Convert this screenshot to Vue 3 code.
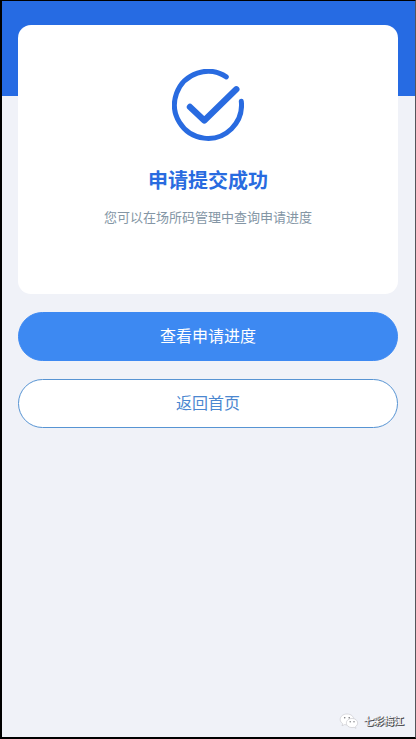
<script setup>
const title = '申请提交成功'
const hint = '您可以在场所码管理中查询申请进度'
</script>

<template>
  <div class="page">
    <main class="content">
      <section class="card">
        <svg class="icon" viewBox="0 0 72 72" fill="none" stroke="#296be0" stroke-linecap="round" stroke-linejoin="round" aria-hidden="true">
          <path d="M54.3 7.8A33.5 33.5 0 1 0 69.3 32.2" stroke-width="5" />
          <path d="M18 38L32.3 51.5L64.3 20.3" stroke-width="6.400" />
        </svg>
        <h1 class="title">{{ title }}</h1>
        <p class="hint">{{ hint }}</p>
      </section>
      <button class="btn primary" type="button">查看申请进度</button>
      <button class="btn outline" type="button">返回首页</button>
    </main>
    <footer class="mark">
      <svg class="mark-icon" viewBox="0 0 20 16" aria-hidden="true">
        <g fill="#ffffff" stroke="#c4c5ca" stroke-width="0.6" stroke-linejoin="round">
          <path d="M8 1C4.1 1 1.2 3.4 1.2 6.4c0 1.8 1 3.3 2.5 4.3L3 12.8l2.5-1.2c.8.2 1.6.3 2.5.3 3.8 0 6.8-2.5 6.8-5.5S11.8 1 8 1z" />
          <path d="M13 5.400c-3.2 0-5.7 2-5.7 4.600s2.5 4.600 5.7 4.600c.7 0 1.400-.1 2-.3l2 1-.5-1.700c1.300-.9 2.200-2.100 2.200-3.600 0-2.600-2.500-4.600-5.700-4.600z" />
        </g>
        <g fill="#77787c">
          <circle cx="5.700" cy="4.700" r="0.800" />
          <circle cx="10.200" cy="4.700" r="0.800" />
          <circle cx="11.200" cy="8.700" r="0.700" />
          <circle cx="15" cy="8.700" r="0.700" />
        </g>
      </svg>
      <span>七彩梅江</span>
    </footer>
  </div>
</template>

<style>
body {
  margin: 0;
}
</style>

<style scoped>
.page {
  box-sizing: border-box;
  min-height: 100vh;
  display: flex;
  flex-direction: column;
  justify-content: space-between;
  border: solid #000000;
  border-width: 1px 1px 2px 2px;
  border-right-color: #55555a;
  background: linear-gradient(#266be3, #266be3) 0 0 / 100% 95px no-repeat #f0f2f8;
  font-family: "Noto Sans CJK SC", sans-serif;
}

.content {
  display: flex;
  flex-direction: column;
  gap: 18px;
  padding: 24px 17px 0 16px;
}

.card {
  display: flex;
  flex-direction: column;
  align-items: center;
  padding: 44px 16px 67px;
  border-radius: 13px;
  background: #ffffff;
}

.icon {
  width: 72px;
  height: 72px;
}

.title {
  margin: 24px 0 0;
  font-size: 20px;
  line-height: 30px;
  font-weight: 700;
  color: #296be0;
}

.hint {
  margin: 12px 0 0;
  font-size: 13px;
  line-height: 20px;
  color: #8496a5;
}

.btn {
  box-sizing: border-box;
  height: 49px;
  padding: 0 0 4px;
  border: 1px solid #3d89f2;
  border-radius: 25px;
  font: 16px/24px "Noto Sans CJK SC", sans-serif;
}

.primary {
  background: #3d89f2;
  color: #ffffff;
}

.outline {
  border-color: #5794d3;
  background: #ffffff;
  color: #4b87d0;
}

.mark {
  display: flex;
  align-items: center;
  justify-content: flex-end;
  gap: 5px;
  padding: 0 11px 8px 0;
  font-size: 10px;
  line-height: 16px;
  color: #ffffff;
  text-shadow: 1px 0 0 #55565a, 0 1px 0 #55565a, 1px 1px 0 #333438;
}

.mark-icon {
  width: 20px;
  height: 16px;
}
</style>
